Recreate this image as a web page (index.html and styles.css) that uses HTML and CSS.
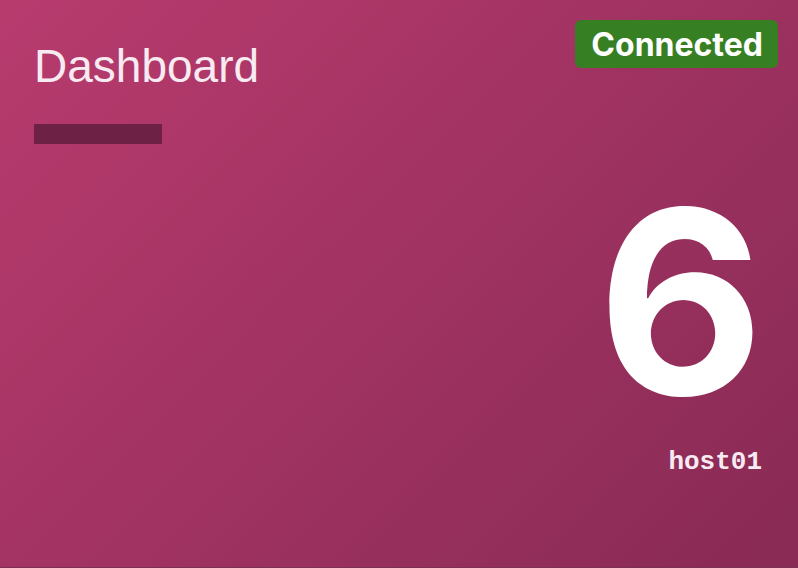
FILE: index.html
```html
<!DOCTYPE html>
<html lang="en">
<head>
<meta charset="utf-8">
<title>Dashboard</title>
<link rel="stylesheet" href="styles.css">
</head>
<body>
<main class="dashboard">
  <header class="header">
    <div class="heading">
      <h1 class="title">Dashboard</h1>
      <div class="rule"></div>
    </div>
    <span class="status">Connected</span>
  </header>
  <section class="metric">
    <strong class="count">6</strong>
    <span class="host">host01</span>
  </section>
</main>
</body>
</html>
```
FILE: styles.css
```css
* {
  box-sizing: border-box;
}

body {
  margin: 0;
  font-family: Inter, "Liberation Sans", sans-serif;
  color: #fff;
}

.dashboard {
  min-height: 100vh;
  background: linear-gradient(135deg, #b83b6e 0%, #882a54 100%);
  border-bottom: 1px solid #7c3152;
}

.header {
  display: flex;
  justify-content: space-between;
  align-items: flex-start;
  padding: 20px 20px 0 34px;
}

.heading {
  padding-top: 16px;
}

.title {
  margin: 0;
  font-family: "Liberation Sans", Arial, sans-serif;
  font-size: 46px;
  line-height: 60px;
  font-weight: 400;
  color: #f8eaf1;
}

.rule {
  width: 128px;
  height: 20px;
  margin-top: 28px;
  background: #6d2245;
}

.status {
  padding: 1px 15px 0 16px;
  border-radius: 6px;
  background: #377f23;
  font-size: 32px;
  line-height: 47px;
  font-weight: 700;
}

.metric {
  display: flex;
  flex-direction: column;
  align-items: flex-end;
  padding: 18px 36px 0 0;
}

.count {
  margin-right: -2px;
  font-size: 256px;
  line-height: 280px;
  font-weight: 700;
}

.host {
  font-family: "Liberation Mono", monospace;
  font-size: 26px;
  line-height: 40px;
  font-weight: 700;
  color: #f8eaf1;
}
```
